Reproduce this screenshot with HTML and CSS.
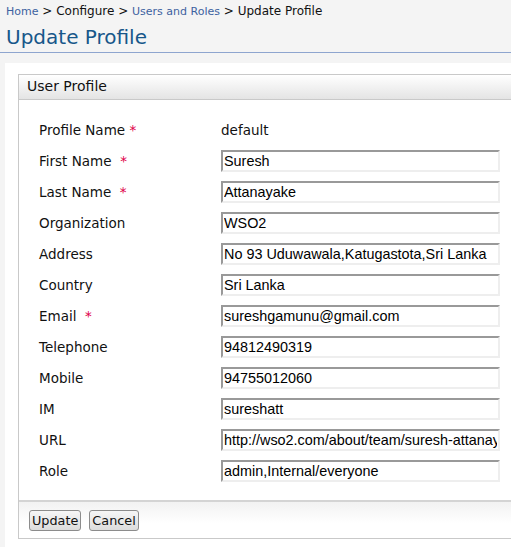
FILE: index.html
```html
<!DOCTYPE html>
<html>
<head>
<meta charset="utf-8">
<link rel="stylesheet" href="styles.css">
</head>
<body>
<div class="breadcrumb"><a class="crumb-link">Home</a> <span class="sep">&gt; Configure &gt;</span> <a class="crumb-link">Users and Roles</a> <span class="sep">&gt; Update Profile</span></div>
<h1 class="title">Update Profile</h1>
<div class="content">
  <div class="panel">
    <div class="panel-head">User Profile</div>
    <div class="form">
      <div class="label">Profile Name <span class="req">*</span></div><div class="value">default</div>
      <div class="label">First Name &nbsp;<span class="req">*</span></div><div class="value"><input class="field" value="Suresh"></div>
      <div class="label">Last Name &nbsp;<span class="req">*</span></div><div class="value"><input class="field" value="Attanayake"></div>
      <div class="label">Organization</div><div class="value"><input class="field" value="WSO2"></div>
      <div class="label">Address</div><div class="value"><input class="field" value="No 93 Uduwawala,Katugastota,Sri Lanka"></div>
      <div class="label">Country</div><div class="value"><input class="field" value="Sri Lanka"></div>
      <div class="label">Email &nbsp;<span class="req">*</span></div><div class="value"><input class="field" value="sureshgamunu@gmail.com"></div>
      <div class="label">Telephone</div><div class="value"><input class="field" value="94812490319"></div>
      <div class="label">Mobile</div><div class="value"><input class="field" value="94755012060"></div>
      <div class="label">IM</div><div class="value"><input class="field" value="sureshatt"></div>
      <div class="label">URL</div><div class="value"><input class="field" value="http://wso2.com/about/team/suresh-attanayake"></div>
      <div class="label">Role</div><div class="value"><input class="field" value="admin,Internal/everyone"></div>
    </div>
    <div class="buttons">
      <button class="btn">Update</button>
      <button class="btn">Cancel</button>
    </div>
  </div>
</div>
</body>
</html>
```
FILE: styles.css
```css
html, body {
  margin: 0;
  padding: 0;
}
body {
  background: #f4f4f4;
  font-family: "DejaVu Sans", sans-serif;
  color: #111;
  overflow: hidden;
  width: 511px;
  height: 547px;
}
.breadcrumb {
  padding: 3px 0 0 6px;
  height: 17px;
  font-size: 12px;
  line-height: 17px;
  white-space: nowrap;
}
.crumb-link {
  color: #3d62a0;
  font-size: 11px;
  text-decoration: none;
}
.sep {
  color: #111;
}
.title {
  margin: 0;
  padding: 3px 0 0 6px;
  height: 29px;
  font-size: 20px;
  font-weight: normal;
  line-height: 28px;
  color: #17578a;
  border-bottom: 1px solid #8ea5cf;
}
.content {
  background: #fff;
  margin: 10px 0 0 5px;
  padding: 11px 0 8px 13px;
  width: 620px;
}
.panel {
  border: 1px solid #c9c9c9;
  border-right: none;
  width: 590px;
}
.panel-head {
  height: 24px;
  line-height: 22px;
  padding-left: 8px;
  font-size: 14px;
  background: linear-gradient(#ffffff, #e4e4e4);
  border-bottom: 1px solid #c9c9c9;
}
.form {
  display: grid;
  grid-template-columns: 182px 1fr;
  grid-auto-rows: 31px;
  padding: 14px 0 14px 20px;
  font-size: 13.5px;
  align-items: center;
}
.label {
  color: #111;
}
.value {
  color: #111;
}
.req {
  color: #e0004a;
}
.field {
  box-sizing: border-box;
  width: 279px;
  height: 22px;
  margin: 0;
  padding: 0 1px;
  border-style: solid;
  border-width: 2px;
  border-color: #999 #eee #eee #999;
  font-family: "Liberation Sans", Arial, sans-serif;
  font-size: 14.4px;
  color: #000;
  background: #fff;
}
.buttons {
  border-top: 2px solid #d4d4d4;
  background: linear-gradient(#f2f2f2, #ffffff 60%);
  padding: 8px 0 7px 10px;
  display: flex;
  gap: 8px;
}
.btn {
  height: 21px;
  margin: 0;
  padding: 0 2px;
  font-family: "DejaVu Sans", sans-serif;
  font-size: 12.8px;
  color: #111;
  border: 1px solid #8c8c8c;
  border-radius: 3px;
  background: linear-gradient(#f6f6f6, #dcdcdc);
}
```
